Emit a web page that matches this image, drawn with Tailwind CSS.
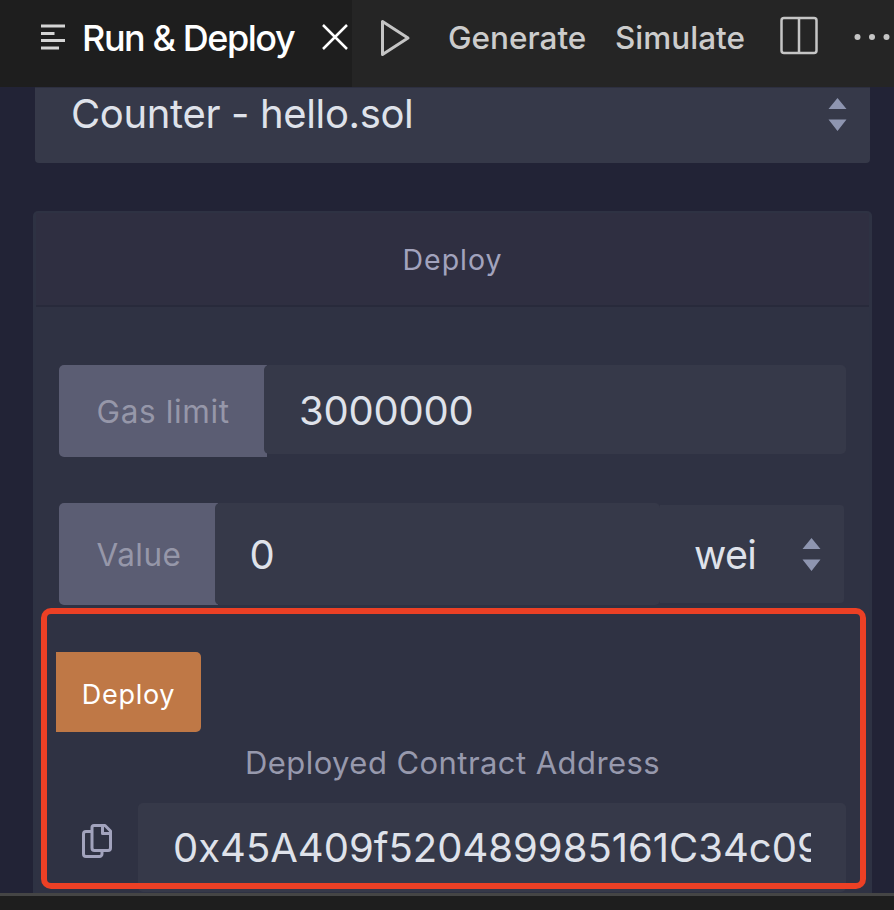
<!DOCTYPE html>
<html lang="en">
<head>
<meta charset="utf-8">
<title>Run &amp; Deploy</title>
<script src="https://cdn.jsdelivr.net/npm/@tailwindcss/browser@4"></script>
</head>
<body class="h-[910px] w-[894px] overflow-hidden bg-[#1e1e1e] font-[Inter,'Liberation_Sans',sans-serif] whitespace-nowrap">
<div class="flex h-full flex-col">
  <header class="flex h-[87px] shrink-0 bg-[#252525]">
    <div class="flex h-full w-[352px] items-start bg-[#1e1e1e] pl-[41px]">
      <svg class="mt-6 h-[27px] w-6 shrink-0" viewBox="0 0 24 27" fill="#d4d4d4"><path d="M0 .5h24v3H0zM0 8h13.500v3H0zM0 15h24v3H0zM0 22.500h18v3H0z"/></svg>
      <span class="mt-[18px] ml-[17px] w-[213px] text-[36px] leading-10 font-medium tracking-[-1.45px] text-white">Run &amp; Deploy</span>
      <svg class="mt-6 ml-[27px] h-[26px] w-[26px] shrink-0" viewBox="0 0 26 26" fill="none" stroke="#fff" stroke-width="2.500"><path d="M1 1l24 24M25 1L1 25"/></svg>
    </div>
    <div class="flex items-start text-[31.500px] leading-10 font-medium text-[#cccccc]">
      <svg class="mt-[18px] ml-7 h-10 w-8 shrink-0" viewBox="0 0 32 40" fill="none" stroke="#c5c5c5" stroke-width="3" stroke-linejoin="round"><path d="M2.500 3.500v33L28 20z"/></svg>
      <span class="mt-[18px] ml-[36px] w-[167px]">Generate</span>
      <span class="mt-[18px] w-[165px]">Simulate</span>
      <svg class="mt-4 h-[39px] w-[38px] shrink-0" viewBox="0 0 38 39" fill="none" stroke="#c5c5c5" stroke-width="2.500"><rect x="1.500" y="2" width="35" height="35" rx="2.500"/><path d="M19 2v35"/></svg>
      <svg class="mt-[33px] ml-[36px] h-2 w-9 shrink-0" viewBox="0 0 36 8" fill="#c5c5c5"><circle cx="3.500" cy="4" r="3"/><circle cx="18" cy="4" r="3"/><circle cx="32.500" cy="4" r="3"/></svg>
    </div>
  </header>

  <main class="h-[806px] shrink-0 overflow-hidden bg-[#222336] pr-[22px] pl-[33px]">
    <div class="mr-0.5 ml-0.5 flex h-[76px] justify-between rounded-b-[4px] border-t border-[#2d2f40] bg-[#363949] pr-[23px] pl-9 text-[#dfe2ea]">
      <span class="mt-[5px] text-[40px] leading-[42px] tracking-[-.35px]">Counter - hello.sol</span>
      <svg class="mt-2.5 h-[33px] w-[19px]" viewBox="0 0 19 33" fill="#8e95b0"><path d="M9.500 0L18.500 11H.5zM.5 21.500h18L9.500 33z"/></svg>
    </div>

    <section class="mt-12 h-[700px] rounded-t-[5px] border-x-[3px] border-t-2 border-[#2e3243] bg-[#2f3243]">
      <h2 class="h-[94px] border-b-2 border-[#282a3b] bg-[#2f2f41] text-center text-[28.500px] leading-[93px] tracking-[1px] text-[#a2a3bd]">Deploy</h2>
      <div class="bg-[#2f3243] px-[23px] pt-[58px]">
        <div class="flex h-[92px] items-start">
          <label class="h-[92px] w-[208px] shrink-0 rounded-l-[5px] bg-[#5b5d73] pl-[37.500px] text-[31.500px] leading-[93px] tracking-[.65px] text-[#9697a9]">Gas limit</label>
          <div class="-ml-[3px] h-[89px] grow rounded-[5px] bg-[#363949] pl-[35px] text-[40px] leading-[92px] tracking-[-.25px] text-[#dfe2ea]">3000000</div>
        </div>
        <div class="mt-[46px] flex h-[102px] items-center">
          <label class="h-[102px] w-[159px] shrink-0 rounded-l-[5px] bg-[#5b5d73] pl-[37.500px] text-[31.500px] leading-[103px] tracking-[.5px] text-[#9697a9]">Value</label>
          <div class="-ml-[3px] h-[102px] w-[445px] shrink-0 rounded-[5px] bg-[#363949] pl-[34.500px] text-[40px] leading-[104px] text-[#dfe2ea]">0</div>
          <div class="flex h-[98px] w-[184px] items-start justify-between rounded-r-[4px] bg-[#363949] pr-[23px] pl-[34px] text-[39.500px] leading-[101px] tracking-[-.7px] text-[#dfe2ea]"><span>wei</span>
            <svg class="mt-[33px] h-[33px] w-[19px]" viewBox="0 0 19 33" fill="#8e95b0"><path d="M9.500 0L18.500 11H.5zM.5 21.500h18L9.500 33z"/></svg>
          </div>
        </div>
        <button class="mt-[47px] -ml-[3px] block h-20 w-[145px] rounded-r-[5px] bg-[#bf7846] text-[27px] leading-[86px] tracking-[.7px] text-white">Deploy</button>
        <div class="mt-[11px] pl-[186px] text-[31px] leading-10 tracking-[.44px] text-[#9799ad]">Deployed Contract Address</div>
        <div class="mt-5 flex items-start">
          <svg class="mt-5 ml-[22px] h-9 w-8 shrink-0" viewBox="0 0 32 36" fill="none" stroke="#a2a3bd" stroke-width="3" stroke-linejoin="round"><path d="M13 2.500h11L29.500 8v17a2.500 2.500 0 0 1-2.500 2.500H13.500A2.500 2.500 0 0 1 11 25V4.500a2 2 0 0 1 2-2z"/><path d="M21.500 3v7.500H29"/><path d="M11 8.500H5A2.500 2.500 0 0 0 2.500 11v20A2.500 2.500 0 0 0 5 33.500h13.500A2.500 2.500 0 0 0 21 31V28"/></svg>
          <div class="ml-[25px] h-[89px] w-[708px] shrink-0 rounded-[5px] bg-[#363949] pr-[35px] pl-[35px] text-[40px] leading-[90px] text-[#dfe2ea]"><div class="overflow-hidden">0x45A409f520489985161C34c09</div></div>
        </div>
      </div>
    </section>
  </main>
  <footer class="h-[17px] border-t-[3px] border-[#454545] bg-[#1e1e1e]"></footer>
</div>
<div class="pointer-events-none absolute top-[608px] left-[41px] h-[281px] w-[825px] rounded-[10px] border-[6px] border-[#ec4025]"></div>
</body>
</html>
